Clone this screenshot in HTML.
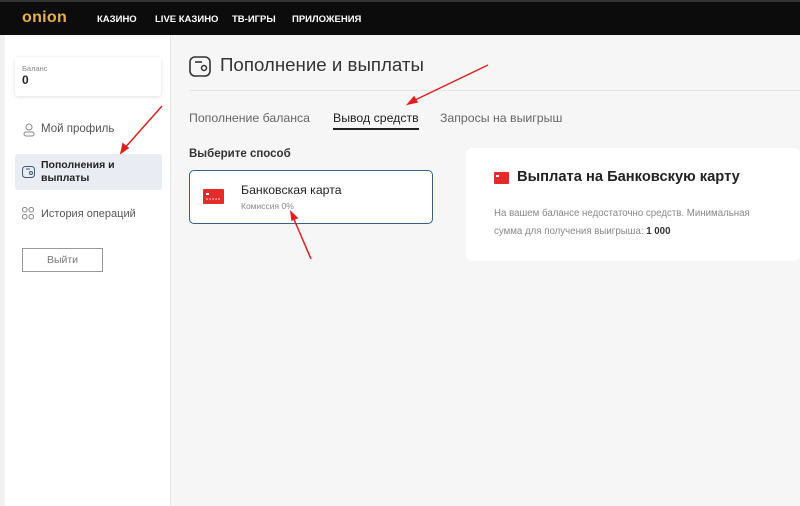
<!DOCTYPE html>
<html><head><meta charset="utf-8"><style>
*{margin:0;padding:0;box-sizing:border-box}
body{width:800px;height:506px;overflow:hidden;background:#f6f6f6;font-family:"Liberation Sans",sans-serif;color:#222;position:relative}
.a{position:absolute}
.hdr{left:0;top:0;width:800px;height:35px;background:#0c0c0c;border-top:2px solid #333}
.nav{color:#fff;font-size:9.5px;font-weight:bold;top:12px}
.side{left:5px;top:35px;width:166px;height:471px;background:#fff;border-right:1px solid #e6e6e6}
</style></head><body>
<div class="a" style="left:0;top:35px;width:5px;height:471px;background:#f0f0f0"></div>
<div class="a hdr">
 <div class="a" style="left:22px;top:7px;font-size:16px;font-weight:bold;color:#e6b14d;letter-spacing:0.3px">onion</div>
 <div class="a nav" style="left:97px">КАЗИНО</div>
 <div class="a nav" style="left:155px">LIVE КАЗИНО</div>
 <div class="a nav" style="left:232px">ТВ-ИГРЫ</div>
 <div class="a nav" style="left:292px">ПРИЛОЖЕНИЯ</div>
</div>
<div class="a side"></div>
<div class="a" style="left:15px;top:57px;width:146px;height:39px;background:#fff;box-shadow:0 1px 4px rgba(0,0,0,.12);border-radius:3px">
 <div class="a" style="left:7px;top:7px;font-size:7.5px;color:#888">Баланс</div>
 <div class="a" style="left:7px;top:16px;font-size:12px;font-weight:bold">0</div>
</div>
<svg class="a" style="left:23px;top:123px" width="12" height="14" viewBox="0 0 12 14"><circle cx="6" cy="4" r="3" fill="none" stroke="#888" stroke-width="1"/><rect x="1" y="9" width="10" height="4" rx="2" fill="none" stroke="#888"/></svg>
<div class="a" style="left:41px;top:123px;font-size:11.5px;color:#555">Мой профиль</div>
<div class="a" style="left:15px;top:154px;width:147px;height:36px;background:#e9edf3;border-radius:3px"></div>
<svg class="a" style="left:22px;top:166px" width="13" height="12" viewBox="0 0 13 12"><rect x="0.5" y="0.5" width="12" height="11" rx="3" fill="none" stroke="#3b5a7a"/><path d="M4 3h4" stroke="#3b5a7a"/><circle cx="9" cy="7" r="1.5" fill="none" stroke="#3b5a7a"/></svg>
<div class="a" style="left:41px;top:159px;font-size:10.5px;font-weight:bold;line-height:13px">Пополнения и<br>выплаты</div>
<svg class="a" style="left:22px;top:207px" width="12" height="13" viewBox="0 0 12 13"><g fill="none" stroke="#888"><rect x="0.5" y="0.5" width="4.5" height="4.5" rx="2"/><rect x="7" y="0.5" width="4.5" height="4.5" rx="2"/><rect x="0.5" y="7.5" width="4.5" height="4.5" rx="2"/><rect x="7" y="7.5" width="4.5" height="4.5" rx="2"/></g></svg>
<div class="a" style="left:41px;top:208px;font-size:11px;color:#555">История операций</div>
<div class="a" style="left:22px;top:248px;width:81px;height:24px;border:1px solid #999;font-size:10.5px;color:#777;text-align:center;line-height:22px">Выйти</div>

<svg class="a" style="left:189px;top:56px" width="22" height="21" viewBox="0 0 22 21"><rect x="1" y="1" width="20" height="19" rx="5" fill="none" stroke="#333" stroke-width="1.6"/><path d="M6 6h7" stroke="#333" stroke-width="1.6"/><circle cx="15" cy="12" r="2.5" fill="none" stroke="#333" stroke-width="1.5"/></svg>
<div class="a" style="left:220px;top:54px;font-size:18.7px;color:#333">Пополнение и выплаты</div>
<div class="a" style="left:189px;top:90px;width:611px;height:1px;background:#e4e4e4"></div>
<div class="a" style="left:189px;top:111px;font-size:12.3px;color:#666">Пополнение баланса</div>
<div class="a" style="left:333px;top:111px;font-size:12.3px;color:#222">Вывод средств</div>
<div class="a" style="left:333px;top:128px;width:86px;height:2px;background:#222"></div>
<div class="a" style="left:440px;top:111px;font-size:12.3px;color:#666">Запросы на выигрыш</div>
<div class="a" style="left:189px;top:148px;font-size:11.5px;font-weight:bold;color:#333">Выберите способ</div>
<div class="a" style="left:189px;top:170px;width:244px;height:54px;background:#fff;border:1.5px solid #3b5f85;border-radius:5px"></div>
<svg class="a" style="left:203px;top:189px" width="21" height="15" viewBox="0 0 21 15"><rect width="21" height="15" rx="1" fill="#e52a2a"/><rect x="3" y="4" width="3" height="2" fill="#fff"/><path d="M3 10h14" stroke="#fff" stroke-width="0.7" stroke-dasharray="2 1"/></svg>
<div class="a" style="left:241px;top:183px;font-size:12.3px;color:#222">Банковская карта</div>
<div class="a" style="left:241px;top:201px;font-size:8.5px;color:#888">Комиссия 0%</div>

<div class="a" style="left:466px;top:148px;width:334px;height:113px;background:#fff;border-radius:6px"></div>
<svg class="a" style="left:494px;top:172px" width="15" height="12" viewBox="0 0 15 12"><rect width="15" height="12" rx="1" fill="#e52a2a"/><rect x="2" y="3" width="3" height="2" fill="#fff"/></svg>
<div class="a" style="left:517px;top:169px;font-size:14.7px;font-weight:bold;color:#222">Выплата на Банковскую карту</div>
<div class="a" style="left:494px;top:205px;font-size:9.7px;color:#888;line-height:18px;width:300px">На вашем балансе недостаточно средств. Минимальная<br>сумма для получения выигрыша: <b style="color:#333">1 000</b></div>

<svg class="a" style="left:0;top:0" width="800" height="506"><g stroke="#e31e1e" stroke-width="1.5" fill="#e31e1e">
<line x1="162" y1="106" x2="123" y2="150"/><path d="M121 153l2-9 5 4z"/>
<line x1="488" y1="65" x2="413" y2="101"/><path d="M408 104l6-7 3 5z"/>
<line x1="311" y1="259" x2="293" y2="217"/><path d="M291 212l6 6-5 2z"/>
</g></svg>
</body></html>
